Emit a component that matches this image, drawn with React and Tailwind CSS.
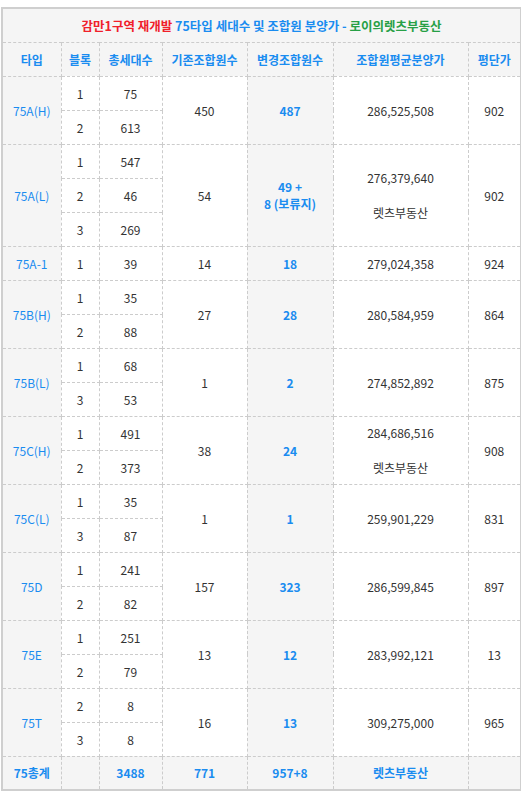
import React from "react";

const rows = [
  { type: "75A(H)", subs: [["1", "75"], ["2", "613"]], exist: "450", changed: ["487"], price: "286,525,508", pyeong: "902" },
  { type: "75A(L)", subs: [["1", "547"], ["2", "46"], ["3", "269"]], exist: "54", changed: ["49 +", "8 (보류지)"], price: "276,379,640", note: "렛츠부동산", pyeong: "902" },
  { type: "75A-1", subs: [["1", "39"]], exist: "14", changed: ["18"], price: "279,024,358", pyeong: "924" },
  { type: "75B(H)", subs: [["1", "35"], ["2", "88"]], exist: "27", changed: ["28"], price: "280,584,959", pyeong: "864" },
  { type: "75B(L)", subs: [["1", "68"], ["3", "53"]], exist: "1", changed: ["2"], price: "274,852,892", pyeong: "875" },
  { type: "75C(H)", subs: [["1", "491"], ["2", "373"]], exist: "38", changed: ["24"], price: "284,686,516", note: "렛츠부동산", pyeong: "908" },
  { type: "75C(L)", subs: [["1", "35"], ["3", "87"]], exist: "1", changed: ["1"], price: "259,901,229", pyeong: "831" },
  { type: "75D", subs: [["1", "241"], ["2", "82"]], exist: "157", changed: ["323"], price: "286,599,845", pyeong: "897" },
  { type: "75E", subs: [["1", "251"], ["2", "79"]], exist: "13", changed: ["12"], price: "283,992,121", pyeong: "13" },
  { type: "75T", subs: [["2", "8"], ["3", "8"]], exist: "16", changed: ["13"], price: "309,275,000", pyeong: "965" },
];

const cell = "border border-dashed border-[#cccccc] text-center align-middle p-0";
const blue = "text-[#1a8cf0]";

export default function App() {
  return (
    <div className="w-[521px] bg-white pt-[7px] pl-[1px]" style={{ fontFamily: '"Noto Sans CJK KR", "Noto Sans", sans-serif' }}>
      <table className="w-[519px] table-fixed border-collapse border-2 border-solid border-[#cfcfcf] text-[12px] text-[#333333] leading-[17px]">
        <colgroup>
          <col className="w-[59px]" />
          <col className="w-[38px]" />
          <col className="w-[63px]" />
          <col className="w-[85px]" />
          <col className="w-[86px]" />
          <col className="w-[135px]" />
          <col className="w-[53px]" />
        </colgroup>
        <tbody>
          <tr className="h-[34px] bg-[#f5f5f5]">
            <td colSpan={7} className={cell + " font-bold text-[12.5px]"}>
              <span className="text-[#f0202a]">감만1구역 재개발 </span>
              <span className={blue}>75타입 세대수 및 조합원 분양가 - </span>
              <span className="text-[#27a046]">로이의렛츠부동산</span>
            </td>
          </tr>
          <tr className={"h-[34px] bg-[#f5f5f5] font-bold " + blue}>
            <td className={cell}>타입</td>
            <td className={cell}>블록</td>
            <td className={cell}>총세대수</td>
            <td className={cell}>기존조합원수</td>
            <td className={cell}>변경조합원수</td>
            <td className={cell}>조합원평균분양가</td>
            <td className={cell}>평단가</td>
          </tr>
          {rows.map((r) =>
            r.subs.map((s, i) => (
              <tr key={r.type + i} className="h-[34px]">
                {i === 0 && (
                  <td rowSpan={r.subs.length} className={cell + " bg-[#f5f5f5] " + blue}>
                    {r.type}
                  </td>
                )}
                <td className={cell + " bg-white"}>{s[0]}</td>
                <td className={cell + " bg-white"}>{s[1]}</td>
                {i === 0 && (
                  <>
                    <td rowSpan={r.subs.length} className={cell + " bg-white"}>{r.exist}</td>
                    <td rowSpan={r.subs.length} className={cell + " bg-[#f5f5f5] font-bold " + blue}>
                      {r.changed.map((c) => (
                        <div key={c}>{c}</div>
                      ))}
                    </td>
                    <td rowSpan={r.subs.length} className={cell + " bg-white"}>
                      {r.note ? (
                        <div className="flex flex-col items-center gap-[18px]">
                          <div>{r.price}</div>
                          <div>{r.note}</div>
                        </div>
                      ) : (
                        r.price
                      )}
                    </td>
                    <td rowSpan={r.subs.length} className={cell + " bg-white"}>{r.pyeong}</td>
                  </>
                )}
              </tr>
            ))
          )}
          <tr className={"h-[34px] bg-[#f5f5f5] font-bold " + blue}>
            <td className={cell}>75총계</td>
            <td className={cell}></td>
            <td className={cell}>3488</td>
            <td className={cell}>771</td>
            <td className={cell}>957+8</td>
            <td className={cell}>렛츠부동산</td>
            <td className={cell}></td>
          </tr>
        </tbody>
      </table>
    </div>
  );
}
